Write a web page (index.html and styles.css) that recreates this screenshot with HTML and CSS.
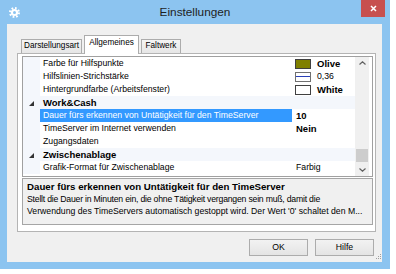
FILE: index.html
```html
<!DOCTYPE html>
<html lang="de">
<head>
  <meta charset="UTF-8">
  <title>Einstellungen</title>
  <link rel="stylesheet" href="styles.css">
</head>
<body>
  <div class="window">
    <div class="titlebar">
      <svg class="app-icon" viewBox="0 0 11 11">
        <circle cx="5.5" cy="5.5" r="3.6" fill="#fff"/>
        <circle cx="5.5" cy="5.5" r="4.4" fill="none" stroke="#fff" stroke-width="2.2" stroke-dasharray="1.7 1.75"/>
        <circle cx="5.5" cy="5.5" r="1.5" fill="#8cc4f0"/>
      </svg>
      <div class="title">Einstellungen</div>
      <div class="close">
        <svg viewBox="0 0 7 7" width="7" height="7">
          <path d="M1 1 L6 6 M6 1 L1 6" stroke="#fff" stroke-width="1.5"/>
        </svg>
      </div>
    </div>

    <div class="client">
      <div class="tabs">
        <div class="tab tab-1">Darstellungsart</div>
        <div class="tab tab-2 active">Allgemeines</div>
        <div class="tab tab-3">Faltwerk</div>
      </div>

      <div class="panel">
        <div class="grid">
          <div class="rows">
            <div class="row">
              <div class="gutter"></div>
              <div class="name">Farbe für Hilfspunkte</div>
              <div class="value"><span class="swatch olive"></span><b>Olive</b></div>
            </div>
            <div class="row">
              <div class="gutter"></div>
              <div class="name">Hilfslinien-Strichstärke</div>
              <div class="value"><span class="swatch line"></span>0,36</div>
            </div>
            <div class="row">
              <div class="gutter"></div>
              <div class="name">Hintergrundfarbe (Arbeitsfenster)</div>
              <div class="value"><span class="swatch white"></span><b>White</b></div>
            </div>
            <div class="row category">
              <div class="gutter"><svg width="5" height="5" viewBox="0 0 5 5"><polygon points="5,0 5,5 0,5" fill="#333"/></svg></div>
              <div class="name">Work&amp;Cash</div>
            </div>
            <div class="row selected">
              <div class="gutter"></div>
              <div class="name">Dauer fürs erkennen von Untätigkeit für den TimeServer</div>
              <div class="value"><b>10</b></div>
            </div>
            <div class="row">
              <div class="gutter"></div>
              <div class="name">TimeServer im Internet verwenden</div>
              <div class="value"><b>Nein</b></div>
            </div>
            <div class="row">
              <div class="gutter"></div>
              <div class="name">Zugangsdaten</div>
              <div class="value"></div>
            </div>
            <div class="row category">
              <div class="gutter"><svg width="5" height="5" viewBox="0 0 5 5"><polygon points="5,0 5,5 0,5" fill="#333"/></svg></div>
              <div class="name">Zwischenablage</div>
            </div>
            <div class="row">
              <div class="gutter"></div>
              <div class="name">Grafik-Format für Zwischenablage</div>
              <div class="value">Farbig</div>
            </div>
          </div>
          <div class="scrollbar">
            <div class="sb-btn">
              <svg width="7" height="4" viewBox="0 0 7 4"><polyline points="0.5,3.5 3.5,0.8 6.5,3.5" fill="none" stroke="#606060" stroke-width="1.2"/></svg>
            </div>
            <div class="sb-track"><div class="sb-thumb"></div></div>
            <div class="sb-btn">
              <svg width="7" height="4" viewBox="0 0 7 4"><polyline points="0.5,0.5 3.5,3.2 6.5,0.5" fill="none" stroke="#606060" stroke-width="1.2"/></svg>
            </div>
          </div>
        </div>

        <div class="help">
          <b>Dauer fürs erkennen von Untätigkeit für den TimeServer</b><br>
          <span class="tight">Stellt die Dauer in Minuten ein, die ohne Tätigkeit vergangen sein muß, damit die</span><br>
          Verwendung des TimeServers automatisch gestoppt wird. Der Wert '0' schaltet den M...
        </div>
      </div>

      <div class="buttons">
        <div class="btn">OK</div>
        <div class="btn">Hilfe</div>
        <svg class="grip" width="5" height="6" viewBox="0 0 5 6">
          <rect x="4" y="1" width="1" height="1" fill="#a0a0a0"/>
          <rect x="2" y="3" width="1" height="1" fill="#a0a0a0"/>
          <rect x="4" y="3" width="1" height="1" fill="#a0a0a0"/>
          <rect x="0" y="5" width="1" height="1" fill="#a0a0a0"/>
          <rect x="2" y="5" width="1" height="1" fill="#a0a0a0"/>
          <rect x="4" y="5" width="1" height="1" fill="#a0a0a0"/>
        </svg>
      </div>
    </div>
  </div>
</body>
</html>
```

FILE: styles.css
```css
* {
  box-sizing: border-box;
}

body {
  margin: 0;
  background-color: #fff;
  font-family: "Liberation Sans", Arial, sans-serif;
  font-size: 8.7px;
  color: #000;
}

.window {
  width: 390px;
  height: 269px;
  background-color: #8cc4f0;
  display: flex;
  flex-direction: column;
  box-shadow: 0 4px 0 #505050;
}

.titlebar {
  height: 24px;
  display: grid;
  grid-template-columns: 1fr auto 1fr;
  align-items: start;
}

.app-icon {
  width: 11px;
  height: 11px;
  margin: 7px 0 0 9px;
}

.title {
  font-size: 11.8px;
  line-height: 24px;
  color: #1e1e1e;
}

.close {
  justify-self: end;
  width: 24px;
  height: 17px;
  margin-right: 5px;
  background-color: #c7504f;
  display: flex;
  align-items: center;
  justify-content: center;
}

.client {
  flex: 1;
  margin: 0 8px 7px 7px;
  background-color: #f0f0f0;
  padding: 11px 6px 0 10px;
  display: flex;
  flex-direction: column;
}

/* tabs */
.tabs {
  height: 18px;
  display: flex;
  align-items: flex-end;
  padding-left: 4px;
}

.tab {
  height: 14px;
  border: 1px solid #acacac;
  border-bottom: none;
  background: linear-gradient(#f4f4f4, #e6e6e6);
  text-align: center;
  font-size: 8.2px;
  line-height: 11px;
  white-space: nowrap;
}

.tab-1 { width: 61px; }
.tab-2 { width: 55px; margin-left: 2px; }
.tab-3 { width: 40px; margin-left: 2px; }

.tab.active {
  height: 19px;
  margin-bottom: -1px;
  background: #fff;
  line-height: 14px;
  position: relative;
  z-index: 1;
}

.panel {
  height: 179px;
  border: 1px solid #b4b4b4;
  background-color: #fff;
  padding: 2px 2px 6px 4px;
  display: flex;
  flex-direction: column;
}

/* property grid */
.grid {
  height: 121px;
  border: 1px solid #a0a0a0;
  display: flex;
}

.rows {
  flex: 1;
  overflow: hidden;
}

.row {
  display: grid;
  grid-template-columns: 17px 252px 63px;
  height: 13px;
  line-height: 13px;
  white-space: nowrap;
}

.gutter {
  background-color: #f4f7fc;
  display: flex;
  align-items: center;
  justify-content: center;
}

.name {
  padding-left: 3px;
  overflow: hidden;
}

.value {
  padding-left: 4px;
  display: flex;
  align-items: center;
}

.value b,
.category .name {
  font-size: 9.5px;
}

.category {
  grid-template-columns: 17px 1fr;
  background-color: #f4f7fc;
  font-weight: bold;
}

.category .gutter svg {
  margin-top: 2px;
}

.selected .name {
  background-color: #3399ff;
  color: #fff;
}

.swatch {
  width: 16px;
  height: 10px;
  border: 1px solid #404040;
  margin: 0 6px 0 -1px;
  flex: none;
}

.swatch.olive { background-color: #808000; }
.swatch.white { background-color: #fff; }
.swatch.line {
  border-color: #707070;
  background: linear-gradient(#fff 0 3px, #2a3fb8 3px 4px, #fff 4px);
}

.scrollbar {
  width: 14px;
  margin-right: 3px;
  background-color: #f0f0f0;
  display: flex;
  flex-direction: column;
}

.sb-btn {
  height: 12px;
  display: flex;
  align-items: center;
  justify-content: center;
}

.sb-track {
  flex: 1;
  display: flex;
  flex-direction: column;
}

.sb-thumb {
  margin: auto 1px 2px;
  height: 13px;
  background-color: #cdcdcd;
}

/* description area */
.help {
  margin-top: 1px;
  height: 47px;
  border: 1px solid #a5a5a5;
  background-color: #f0f0f0;
  padding: 2px 4px;
  line-height: 12px;
  white-space: nowrap;
  overflow: hidden;
}

.help b {
  font-size: 9.7px;
}

.help .tight {
  letter-spacing: -0.22px;
}

/* buttons */
.buttons {
  display: flex;
  justify-content: flex-end;
  gap: 7px;
  margin-top: 7px;
}

.btn {
  width: 59px;
  height: 17px;
  border: 1px solid #acacac;
  background: linear-gradient(#f2f2f2, #e4e4e4);
  text-align: center;
  line-height: 15px;
}

.grip {
  align-self: flex-end;
  margin: 0 -5px -3px -5px;
}
```
